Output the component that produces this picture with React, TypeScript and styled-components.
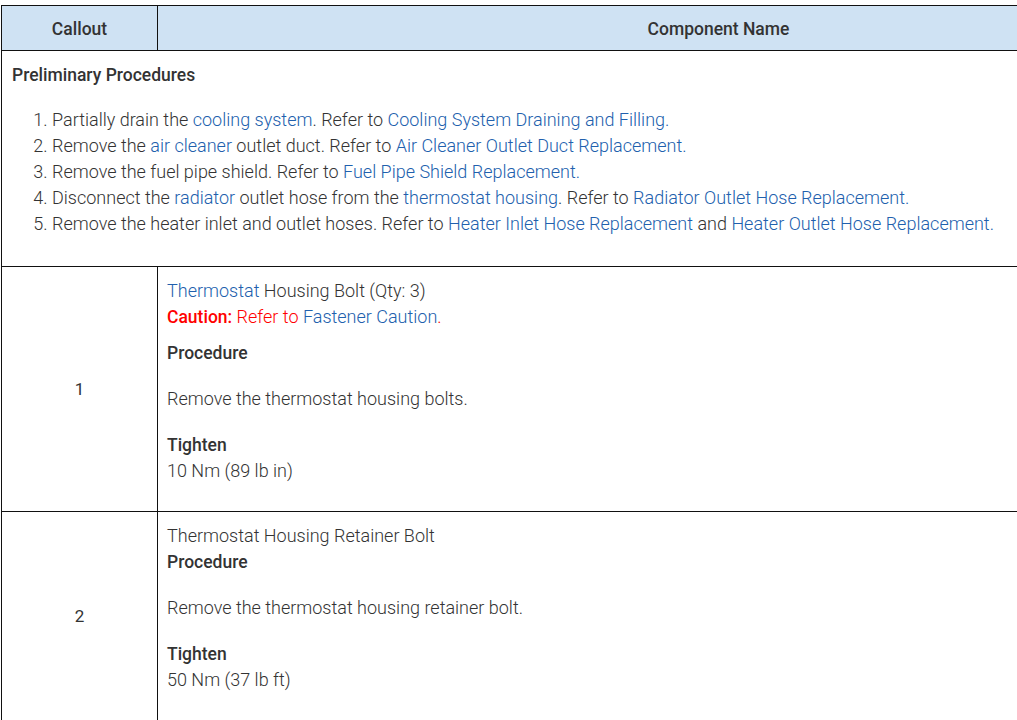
import React from 'react';
import styled, { createGlobalStyle } from 'styled-components';

const GlobalStyle = createGlobalStyle`
  html, body {
    margin: 0;
    padding: 0;
    background: #fff;
    overflow: hidden;
  }
  body {
    font-family: Roboto, "Liberation Sans", Arial, sans-serif;
    color: #333;
  }
`;

const Page = styled.div`
  padding: 5px 0 0 1px;
  width: 1400px;
`;

const Table = styled.table`
  width: 1279px;
  border-collapse: collapse;
  font-family: Roboto, "Liberation Sans", Arial, sans-serif;
  font-size: 18px;
  font-weight: 300;
  line-height: 26px;
  color: #333;
`;

const HeadCell = styled.th<{ $w?: number }>`
  background: #cfe2f3;
  border: 1px solid #111;
  height: 42px;
  padding: 2px 0 0 0;
  font-weight: 500;
  font-size: 17.5px;
  color: #333;
  text-align: center;
  width: ${p => (p.$w ? `${p.$w}px` : 'auto')};
`;

const Cell = styled.td`
  border: 1px solid #111;
  color: #333;
  vertical-align: middle;
  text-align: left;
  padding: 11px 9px 7px 9px;
`;

const CalloutCell = styled.td`
  border: 1px solid #111;
  color: #333;
  vertical-align: middle;
  text-align: center;
  padding: 0;
  font-weight: 400;
  font-size: 17px;
`;

const Heading = styled.div`
  font-weight: 500;
  font-size: 17.5px;
  color: #333;
`;

const Steps = styled.ol`
  margin: 19px 0 20px 0;
  padding-left: 40px;
`;

const Link = styled.span`
  color: #2160ad;
`;

const Warn = styled.span<{ $bold?: boolean }>`
  color: #f00;
  font-weight: ${p => (p.$bold ? 500 : 300)};
  font-size: ${p => (p.$bold ? '17.5px' : 'inherit')};
`;

const Line = styled.div<{ $gap?: number }>`
  margin-bottom: ${p => p.$gap ?? 0}px;
`;

const Para = styled.p`
  margin: 20px 0;
`;

const Value = styled.div`
  margin-bottom: 20px;
`;

const App: React.FC = () => (
  <Page>
    <GlobalStyle />
    <Table>
      <thead>
        <tr>
          <HeadCell $w={155}>Callout</HeadCell>
          <HeadCell>Component Name</HeadCell>
        </tr>
      </thead>
      <tbody>
        <tr>
          <Cell colSpan={2} style={{ padding: '11px 9px 9px 10px' }}>
            <Heading>Preliminary Procedures</Heading>
            <Steps>
              <li>
                Partially drain the <Link>cooling system</Link>. Refer to{' '}
                <Link>Cooling System Draining and Filling.</Link>
              </li>
              <li>
                Remove the <Link>air cleaner</Link> outlet duct. Refer to{' '}
                <Link>Air Cleaner Outlet Duct Replacement.</Link>
              </li>
              <li>
                Remove the fuel pipe shield. Refer to{' '}
                <Link>Fuel Pipe Shield Replacement.</Link>
              </li>
              <li>
                Disconnect the <Link>radiator</Link> outlet hose from the{' '}
                <Link>thermostat housing</Link>. Refer to{' '}
                <Link>Radiator Outlet Hose Replacement.</Link>
              </li>
              <li>
                Remove the heater inlet and outlet hoses. Refer to{' '}
                <Link>Heater Inlet Hose Replacement</Link> and{' '}
                <Link>Heater Outlet Hose Replacement.</Link>
              </li>
            </Steps>
          </Cell>
        </tr>
        <tr>
          <CalloutCell>1</CalloutCell>
          <Cell>
            <Line>
              <Link>Thermostat</Link> Housing Bolt (Qty: 3)
            </Line>
            <Line $gap={10}>
              <Warn $bold>Caution:</Warn> <Warn>Refer to</Warn>{' '}
              <Link>Fastener Caution</Link>
              <Warn>.</Warn>
            </Line>
            <Heading>Procedure</Heading>
            <Para>Remove the thermostat housing bolts.</Para>
            <Heading>Tighten</Heading>
            <Value>10 Nm (89 lb in)</Value>
          </Cell>
        </tr>
        <tr>
          <CalloutCell>2</CalloutCell>
          <Cell>
            <Line>Thermostat Housing Retainer Bolt</Line>
            <Heading>Procedure</Heading>
            <Para>Remove the thermostat housing retainer bolt.</Para>
            <Heading>Tighten</Heading>
            <Value>50 Nm (37 lb ft)</Value>
          </Cell>
        </tr>
      </tbody>
    </Table>
  </Page>
);

export default App;
